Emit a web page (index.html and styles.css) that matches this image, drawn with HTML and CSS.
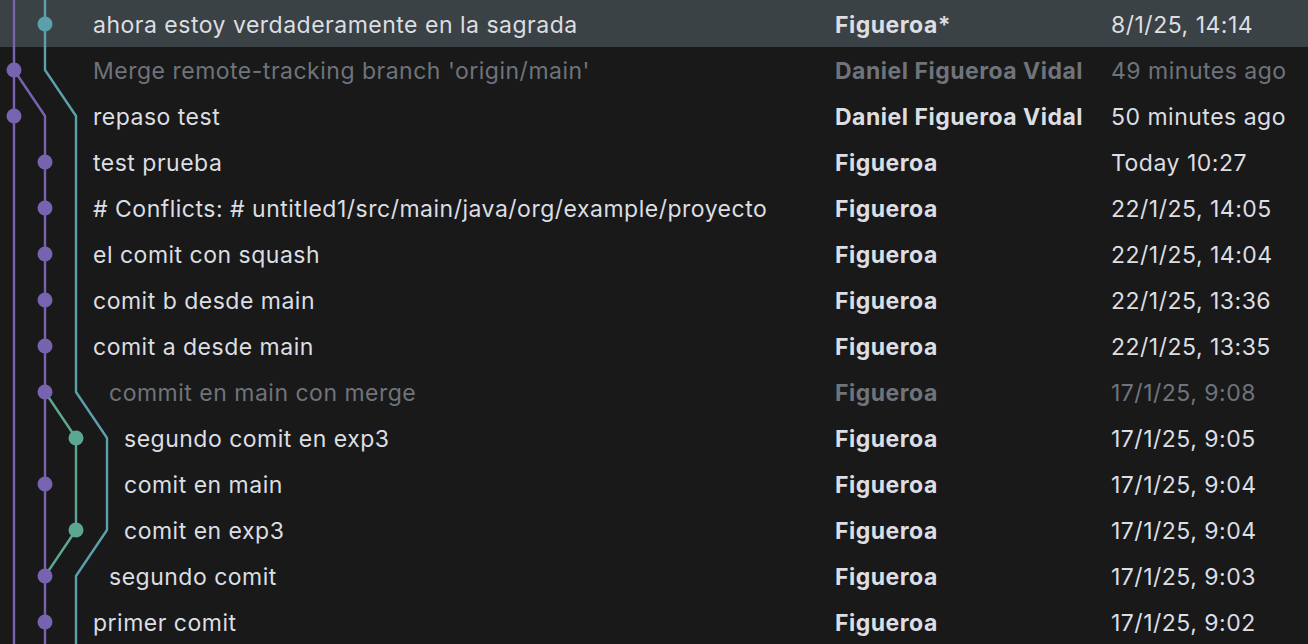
FILE: index.html
```html
<!DOCTYPE html>
<html>
<head>
<meta charset="utf-8">
<link rel="stylesheet" href="styles.css">
</head>
<body>
<div class="log">
  <svg class="graph" width="130" height="644" viewBox="0 0 130 644">
    <g fill="none" stroke-width="2.4" stroke-linejoin="round">
      <path d="M14 0 V644" stroke="#7763b0"/>
      <path d="M14 70 L45 116 V644" stroke="#7763b0"/>
      <path d="M45 0 V70 L76 116 V392 L107 438 V530 L76 576 V644" stroke="#5ba0aa"/>
      <path d="M45 392 L76 438 V530 L45 576" stroke="#5ca794"/>
    </g>
    <g fill="#7763b0">
      <circle cx="14" cy="70" r="7.5"/>
      <circle cx="14" cy="116" r="7.5"/>
      <circle cx="45" cy="162" r="7.5"/>
      <circle cx="45" cy="208" r="7.5"/>
      <circle cx="45" cy="254" r="7.5"/>
      <circle cx="45" cy="300" r="7.5"/>
      <circle cx="45" cy="346" r="7.5"/>
      <circle cx="45" cy="392" r="7.5"/>
      <circle cx="45" cy="484" r="7.5"/>
      <circle cx="45" cy="576" r="7.5"/>
      <circle cx="45" cy="622" r="7.5"/>
    </g>
    <circle cx="45" cy="24" r="7.5" fill="#5ba0aa"/>
    <g fill="#5ca794">
      <circle cx="76" cy="438" r="7.5"/>
      <circle cx="76" cy="530" r="7.5"/>
    </g>
  </svg>
  <div class="row selected first"><span class="msg">ahora estoy verdaderamente en la sagrada</span><span class="author">Figueroa*</span><span class="date">8/1/25, 14:14</span></div>
  <div class="row dim"><span class="msg">Merge remote-tracking branch 'origin/main'</span><span class="author">Daniel Figueroa Vidal</span><span class="date">49 minutes ago</span></div>
  <div class="row"><span class="msg">repaso test</span><span class="author">Daniel Figueroa Vidal</span><span class="date">50 minutes ago</span></div>
  <div class="row"><span class="msg">test prueba</span><span class="author">Figueroa</span><span class="date">Today 10:27</span></div>
  <div class="row"><span class="msg"># Conflicts: # untitled1/src/main/java/org/example/proyecto</span><span class="author">Figueroa</span><span class="date">22/1/25, 14:05</span></div>
  <div class="row"><span class="msg">el comit con squash</span><span class="author">Figueroa</span><span class="date">22/1/25, 14:04</span></div>
  <div class="row"><span class="msg">comit b desde main</span><span class="author">Figueroa</span><span class="date">22/1/25, 13:36</span></div>
  <div class="row"><span class="msg">comit a desde main</span><span class="author">Figueroa</span><span class="date">22/1/25, 13:35</span></div>
  <div class="row dim mid"><span class="msg">commit en main con merge</span><span class="author">Figueroa</span><span class="date">17/1/25, 9:08</span></div>
  <div class="row wide"><span class="msg">segundo comit en exp3</span><span class="author">Figueroa</span><span class="date">17/1/25, 9:05</span></div>
  <div class="row wide"><span class="msg">comit en main</span><span class="author">Figueroa</span><span class="date">17/1/25, 9:04</span></div>
  <div class="row wide"><span class="msg">comit en exp3</span><span class="author">Figueroa</span><span class="date">17/1/25, 9:04</span></div>
  <div class="row mid"><span class="msg">segundo comit</span><span class="author">Figueroa</span><span class="date">17/1/25, 9:03</span></div>
  <div class="row"><span class="msg">primer comit</span><span class="author">Figueroa</span><span class="date">17/1/25, 9:02</span></div>
</div>
</body>
</html>
```
FILE: styles.css
```css
html, body {
  margin: 0;
  padding: 0;
  background: #19191a;
  overflow: hidden;
}
.log {
  position: relative;
  width: 1308px;
  height: 644px;
  font-family: Inter, "Noto Sans", sans-serif;
  font-size: 23px;
  letter-spacing: 0.5px;
  color: #dcdee2;
}
.graph {
  position: absolute;
  left: 0;
  top: 0;
  z-index: 2;
}
.row {
  display: grid;
  grid-template-columns: 835px 276px 1fr;
  height: 46px;
  padding-top: 2px;
  box-sizing: border-box;
  line-height: 44px;
  white-space: nowrap;
}
.row.first {
  height: 47px;
  padding-top: 3px;
}
.row.selected {
  background: #3b4245;
}
.msg {
  padding-left: 93px;
  overflow: hidden;
}
.row.mid .msg { padding-left: 109px; }
.row.wide .msg { padding-left: 124px; }
.author {
  font-weight: 700;
}
.row.dim { color: #6f737a; }
```
